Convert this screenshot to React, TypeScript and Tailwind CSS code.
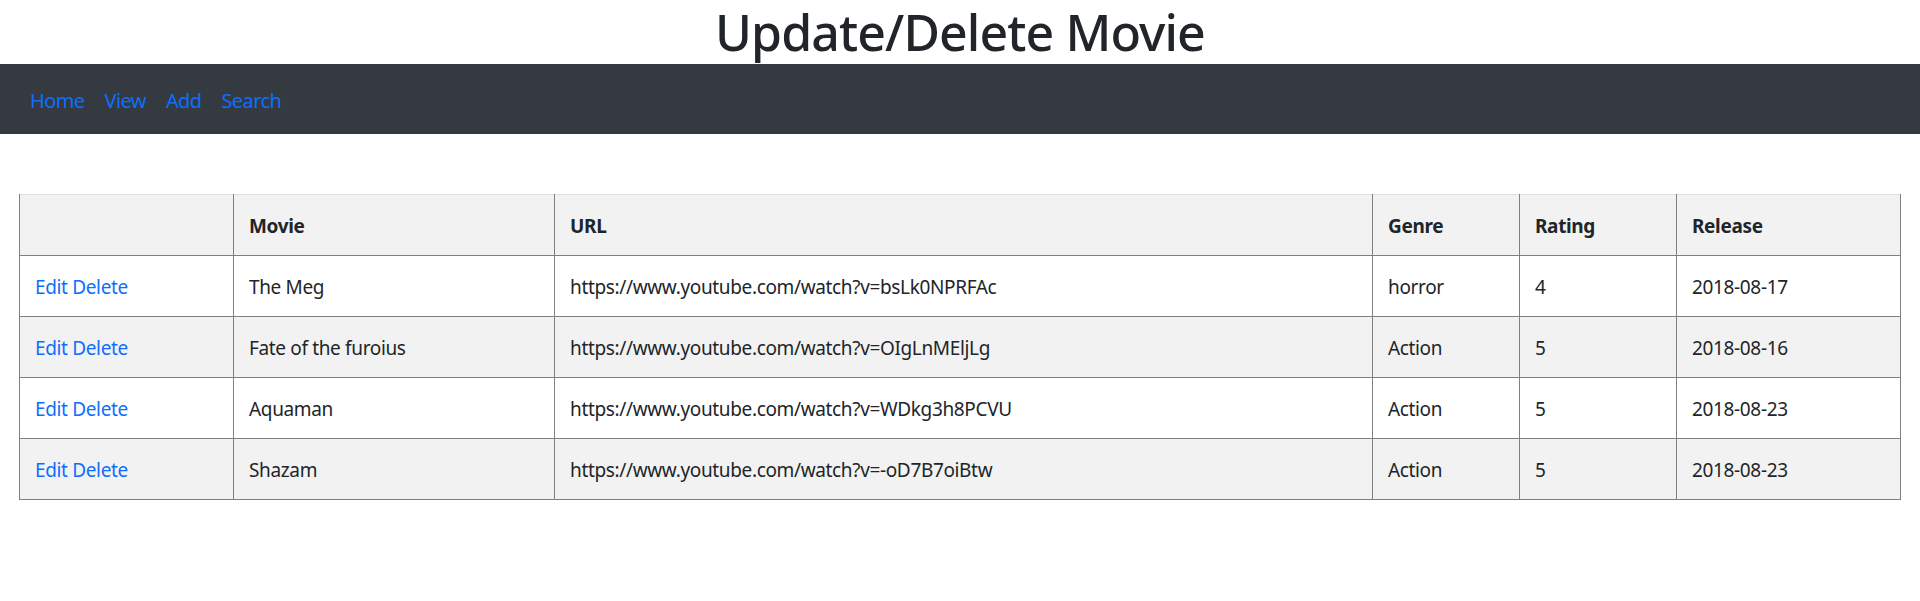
import React from "react";

const rows = [
  { movie: "The Meg", url: "https://www.youtube.com/watch?v=bsLk0NPRFAc", genre: "horror", rating: "4", release: "2018-08-17" },
  { movie: "Fate of the furoius", url: "https://www.youtube.com/watch?v=OIgLnMEljLg", genre: "Action", rating: "5", release: "2018-08-16" },
  { movie: "Aquaman", url: "https://www.youtube.com/watch?v=WDkg3h8PCVU", genre: "Action", rating: "5", release: "2018-08-23" },
  { movie: "Shazam", url: "https://www.youtube.com/watch?v=-oD7B7oiBtw", genre: "Action", rating: "5", release: "2018-08-23" },
];

const cell = "border border-[#808080] px-[15px] pt-[16px] pb-[14px]";

export default function App() {
  return (
    <div className="w-[1920px] min-h-[601px] bg-white text-[#212529] text-[19px] leading-[30px] tracking-[-0.35px]" style={{ fontFamily: '"Noto Sans", "Open Sans", sans-serif' }}>
      <h1 className="h-[64px] pt-[2px] text-center text-[50px] leading-[60px] font-medium tracking-[-0.9px]">Update/Delete Movie</h1>
      <nav className="h-[70px] bg-[#343a40] flex items-center px-[20px] pt-[3px]">
        {["Home", "View", "Add", "Search"].map((l) => (
          <a key={l} className="px-[10px] text-[#0d6efd] text-[20px] tracking-[-0.6px] leading-[30px]">{l}</a>
        ))}
      </nav>
      <div className="px-[19px] pt-[60px]">
        <table className="w-full table-fixed border-collapse border border-[#808080]">
          <colgroup>
            <col className="w-[214px]" />
            <col className="w-[321px]" />
            <col className="w-[818px]" />
            <col className="w-[147px]" />
            <col className="w-[157px]" />
            <col />
          </colgroup>
          <thead>
            <tr className="bg-[#f2f2f2] border-t border-t-[#dee2e6]">
              {["", "Movie", "URL", "Genre", "Rating", "Release"].map((h, i) => (
                <th key={i} className="border-x border-[#808080] border-b px-[15px] pt-[16px] pb-[14px] text-left font-bold align-top">{h}</th>
              ))}
            </tr>
          </thead>
          <tbody>
            {rows.map((r, i) => (
              <tr key={i} className={i % 2 === 1 ? "bg-[#f2f2f2]" : "bg-white"}>
                <td className={cell + " text-[#0d6efd]"}>Edit Delete</td>
                <td className={cell}>{r.movie}</td>
                <td className={cell}>{r.url}</td>
                <td className={cell}>{r.genre}</td>
                <td className={cell}>{r.rating}</td>
                <td className={cell}>{r.release}</td>
              </tr>
            ))}
          </tbody>
        </table>
      </div>
    </div>
  );
}
